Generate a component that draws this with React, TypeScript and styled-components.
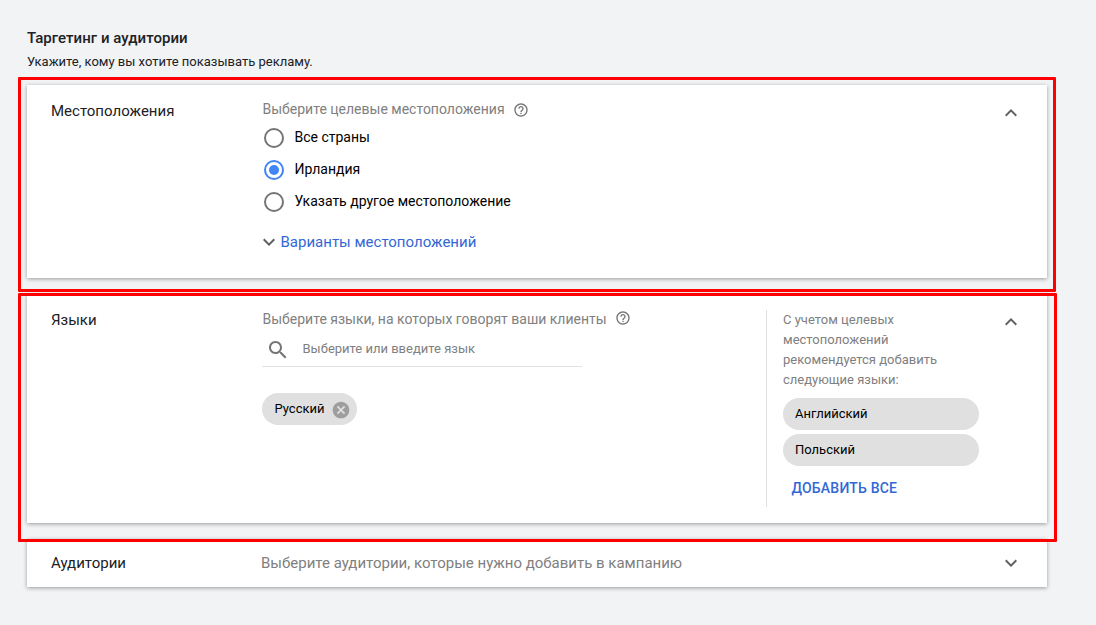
import React from 'react';
import styled, { createGlobalStyle } from 'styled-components';

const GlobalStyle = createGlobalStyle`
  html, body { margin: 0; padding: 0; }
  body { background: #f1f3f4; }
  *, *::before, *::after { box-sizing: border-box; }
`;

const Page = styled.main`
  position: relative;
  width: 1096px;
  height: 625px;
  padding: 28px 49px 0 27px;
  background: #f1f3f4;
  font-family: Roboto, 'Noto Sans', sans-serif;
  color: #202124;
  overflow: hidden;
`;

const PageTitle = styled.h1`
  margin: 0;
  font-size: 15px;
  font-weight: 500;
  line-height: 20px;
  letter-spacing: 0.05px;
`;

const PageSubtitle = styled.p`
  margin: 4px 0 13px;
  font-size: 13px;
  line-height: 20px;
`;

const CardStack = styled.div`
  display: flex;
  flex-direction: column;
  gap: 16px;
`;

const Card = styled.section<{ $height: number }>`
  display: grid;
  grid-template-columns: 211px 1fr auto;
  height: ${(p) => p.$height}px;
  padding-left: 24px;
  padding-right: 24px;
  background: #fff;
  box-shadow: 0 1px 4px 0 rgba(0, 0, 0, 0.37);
`;

const CardTitle = styled.h2<{ $top: number }>`
  margin: ${(p) => p.$top}px 0 0;
  font-size: 15px;
  font-weight: 400;
  line-height: 20px;
`;

const CardBody = styled.div<{ $top: number }>`
  padding-top: ${(p) => p.$top}px;
`;

const Hint = styled.div`
  display: flex;
  align-items: center;
  height: 20px;
  gap: 8px;
  padding-left: 0.5px;
  font-size: 14px;
  line-height: 20px;
  color: #808080;
  white-space: nowrap;
`;

const HelpMark = styled.svg<{ $shift?: number }>`
  width: 16px;
  height: 16px;
  margin-top: ${(p) => p.$shift ?? 0}px;
  fill: #757575;
`;

const RadioList = styled.div`
  display: flex;
  flex-direction: column;
  gap: 12px;
  padding: 9px 0 0 2.3px;
`;

const RadioRow = styled.label`
  display: flex;
  align-items: center;
  gap: 10.2px;
  height: 20px;
`;

const RadioDot = styled.span<{ $checked?: boolean }>`
  display: grid;
  place-items: center;
  width: 20px;
  height: 20px;
  border: 2px solid ${(p) => (p.$checked ? '#4285f4' : '#757575')};
  border-radius: 50%;
  &::after {
    content: '';
    width: 10px;
    height: 10px;
    border-radius: 50%;
    background: ${(p) => (p.$checked ? '#4285f4' : 'transparent')};
  }
`;

const RadioLabel = styled.span`
  margin-top: -2px;
  font-size: 14px;
  line-height: 20px;
  color: #000;
`;

const MoreLink = styled.a`
  display: flex;
  align-items: center;
  height: 20px;
  margin: 20px 0 0 -5.5px;
  font-size: 15px;
  line-height: 20px;
  color: #3367d6;
`;

const Chevron = styled.svg`
  width: 24px;
  height: 24px;
  fill: #616161;
`;

const ToggleSlot = styled.div<{ $top: number }>`
  width: 24px;
  margin-right: 0.5px;
  padding-top: ${(p) => p.$top}px;
  height: 24px;
`;

const LanguageBody = styled.div`
  display: flex;
  justify-content: space-between;
  padding: 15px 20px 0 0;
`;

const LanguagePicker = styled.div`
  width: 400px;
`;

const SearchField = styled.div`
  display: flex;
  align-items: center;
  gap: 12.5px;
  width: 320px;
  height: 38px;
  padding: 3px 0 0 4px;
  border-bottom: 1px solid #e0e0e0;
  font-size: 13px;
  color: #808080;
`;

const FieldText = styled.span`
  line-height: 20px;
`;

const SearchIcon = styled.svg`
  width: 24px;
  height: 24px;
  margin-top: 2px;
  fill: #757575;
`;

const Chip = styled.div`
  display: flex;
  align-items: center;
  height: 32px;
  padding: 0 12.5px;
  border-radius: 16px;
  background: #e0e0e0;
  font-size: 13px;
  color: #000;
  span { line-height: 20px; margin-top: -1px; }
`;

const SelectedChip = styled(Chip)`
  width: 95px;
  margin-top: 26px;
  padding-right: 6.5px;
  justify-content: space-between;
`;

const CancelIcon = styled.svg`
  width: 20px;
  height: 20px;
  margin-top: 1px;
  fill: #9e9e9e;
`;

const Suggestions = styled.aside`
  width: 213px;
  height: 197px;
  margin-top: 1px;
  padding-left: 16px;
  border-left: 1px solid #e0e0e0;
`;

const SuggestionText = styled.p`
  margin: 0 0 8px;
  padding-left: 0.5px;
  font-size: 13px;
  line-height: 20px;
  color: #808080;
`;

const ChipList = styled.div`
  display: flex;
  flex-direction: column;
  gap: 4px;
`;

const AddAll = styled.button`
  display: block;
  margin: 12px 0 0 9px;
  padding: 0;
  border: 0;
  background: none;
  font: 500 14px/20px Roboto, sans-serif;
  letter-spacing: 0.2px;
  color: #3367d6;
`;

const AudienceHint = styled(Hint)`
  padding-left: 0;
  margin-left: -1px;
  font-size: 15px;
`;

/* Highlight frames lie over the cards they call out. */
const Frame = styled.div<{ $top: number; $width: number; $height: number }>`
  position: absolute;
  left: 18px;
  top: ${(p) => p.$top}px;
  width: ${(p) => p.$width}px;
  height: ${(p) => p.$height}px;
  border: 3px solid #ff0000;
  border-radius: 1px;
  pointer-events: none;
`;

const Help = ({ shift }: { shift?: number }) => (
  <HelpMark viewBox="0 0 24 24" $shift={shift}>
    <path d="M11 18h2v-2h-2v2zm1-16C6.48 2 2 6.48 2 12s4.48 10 10 10 10-4.48 10-10S17.52 2 12 2zm0 18c-4.41 0-8-3.59-8-8s3.59-8 8-8 8 3.59 8 8-3.59 8-8 8zm0-14c-2.21 0-4 1.79-4 4h2c0-1.1.9-2 2-2s2 .9 2 2c0 2-3 1.75-3 5h2c0-2.25 3-2.5 3-5 0-2.21-1.79-4-4-4z" />
  </HelpMark>
);

const Expand = ({ up }: { up?: boolean }) => (
  <Chevron viewBox="0 0 24 24">
    <path d={up ? 'M12 8l-6 6 1.41 1.41L12 10.83l4.59 4.58L18 14z' : 'M16.59 8.59L12 13.17 7.41 8.59 6 10l6 6 6-6z'} />
  </Chevron>
);

const locations = ['Все страны', 'Ирландия', 'Указать другое местоположение'];
const suggested = ['Английский', 'Польский'];

export default function App() {
  return (
    <>
      <GlobalStyle />
      <Page>
        <PageTitle>Таргетинг и аудитории</PageTitle>
        <PageSubtitle>Укажите, кому вы хотите показывать рекламу.</PageSubtitle>
        <CardStack>
          <Card $height={193}>
            <CardTitle $top={16}>Местоположения</CardTitle>
            <CardBody $top={14}>
              <Hint>
                Выберите целевые местоположения <Help shift={2} />
              </Hint>
              <RadioList>
                {locations.map((name, i) => (
                  <RadioRow key={name}>
                    <RadioDot $checked={i === 1} />
                    <RadioLabel>{name}</RadioLabel>
                  </RadioRow>
                ))}
              </RadioList>
              <MoreLink>
                <Expand />
                Варианты местоположений
              </MoreLink>
            </CardBody>
            <ToggleSlot $top={16}>
              <Expand up />
            </ToggleSlot>
          </Card>

          <Card $height={229}>
            <CardTitle $top={16}>Языки</CardTitle>
            <LanguageBody>
              <LanguagePicker>
                <Hint>
                  Выберите языки, на которых говорят ваши клиенты <Help shift={-2} />
                </Hint>
                <SearchField>
                  <SearchIcon viewBox="0 0 24 24">
                    <path d="M15.5 14h-.79l-.28-.27C15.41 12.59 16 11.11 16 9.5 16 5.91 13.09 3 9.5 3S3 5.91 3 9.5 5.91 16 9.5 16c1.61 0 3.09-.59 4.23-1.57l.27.28v.79l5 4.99L20.49 19l-4.99-5zm-6 0C7.01 14 5 11.99 5 9.5S7.01 5 9.5 5 14 7.01 14 9.5 11.99 14 9.5 14z" />
                  </SearchIcon>
                  <FieldText>Выберите или введите язык</FieldText>
                </SearchField>
                <SelectedChip>
                  <span>Русский</span>
                  <CancelIcon viewBox="0 0 24 24">
                    <path d="M12 2C6.47 2 2 6.47 2 12s4.47 10 10 10 10-4.47 10-10S17.53 2 12 2zm5 13.59L15.59 17 12 13.41 8.41 17 7 15.59 10.59 12 7 8.41 8.41 7 12 10.59 15.59 7 17 8.41 13.41 12 17 15.59z" />
                  </CancelIcon>
                </SelectedChip>
              </LanguagePicker>
              <Suggestions>
                <SuggestionText>
                  С учетом целевых
                  <br />
                  местоположений
                  <br />
                  рекомендуется добавить
                  <br />
                  следующие языки:
                </SuggestionText>
                <ChipList>
                  {suggested.map((name) => (
                    <Chip key={name}>
                      <span>{name}</span>
                    </Chip>
                  ))}
                </ChipList>
                <AddAll>ДОБАВИТЬ ВСЕ</AddAll>
              </Suggestions>
            </LanguageBody>
            <ToggleSlot $top={16}>
              <Expand up />
            </ToggleSlot>
          </Card>

          <Card $height={48}>
            <CardTitle $top={14}>Аудитории</CardTitle>
            <CardBody $top={14}>
              <AudienceHint>Выберите аудитории, которые нужно добавить в кампанию</AudienceHint>
            </CardBody>
            <ToggleSlot $top={12}>
              <Expand />
            </ToggleSlot>
          </Card>
        </CardStack>
        <Frame $top={77} $width={1038} $height={215} />
        <Frame $top={293} $width={1039} $height={249} />
      </Page>
    </>
  );
}
